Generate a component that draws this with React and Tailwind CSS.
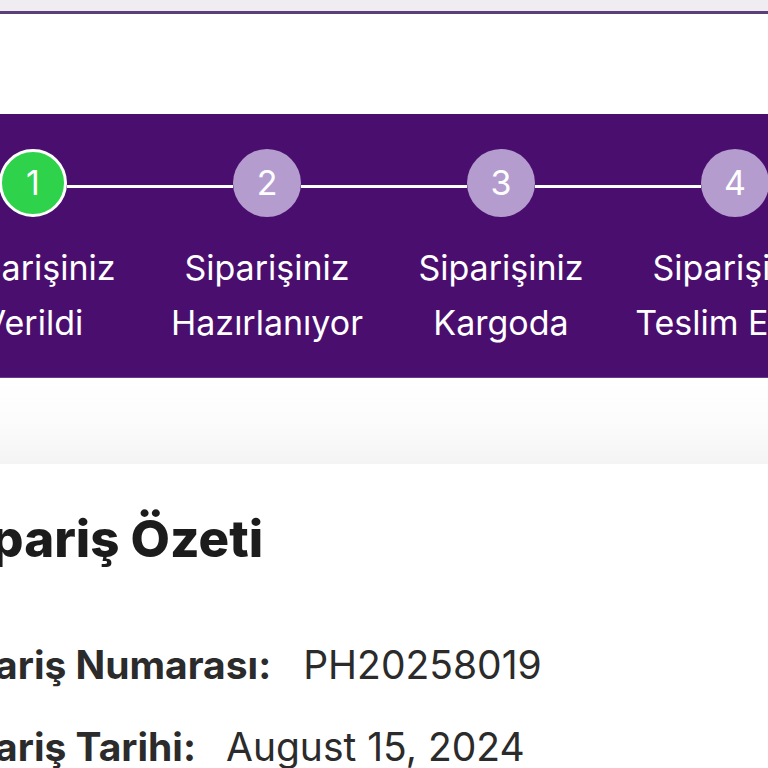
import React from "react";

const steps = [
  { n: 1, l1: "Siparişiniz", l2: "Verildi", done: true },
  { n: 2, l1: "Siparişiniz", l2: "Hazırlanıyor" },
  { n: 3, l1: "Siparişiniz", l2: "Kargoda" },
  { n: 4, l1: "Siparişiniz", l2: "Teslim Edildi" },
];

export default function App() {
  return (
    <div className="w-[768px] h-[768px] overflow-hidden bg-white" style={{ fontFamily: "Inter, 'Noto Sans', sans-serif" }}>
      <div className="h-[11px] bg-[#efedf1]" />
      <div className="h-[3px] bg-[#5b3f7b]" />
      <div className="h-[100px] bg-white" />
      <div className="h-[264px] bg-[#4a0e6e] border-b border-[#6a3a8a] pt-[35px]">
        <div className="flex ml-[-84px] w-[936px]">
          {steps.map((s, i) => (
            <div key={s.n} className="w-[234px] flex flex-col items-center shrink-0">
              <div className="flex items-center w-full">
                <div className={`flex-1 h-[3px] mt-[6px] ${i === 0 ? "bg-transparent" : "bg-white"}`} />
                <div
                  className={`w-[68px] h-[68px] rounded-full flex items-center justify-center text-white text-[34px] leading-none ${
                    s.done ? "bg-[#2ed24b] border-[3px] border-white" : "bg-[#b59ccf]"
                  }`}
                >
                  {s.n}
                </div>
                <div className={`flex-1 h-[3px] mt-[6px] ${i === steps.length - 1 ? "bg-transparent" : "bg-white"}`} />
              </div>
              <div className="mt-[23px] text-white text-[34px] leading-[55px] text-center whitespace-nowrap">
                <div>{s.l1}</div>
                <div>{s.l2}</div>
              </div>
            </div>
          ))}
        </div>
      </div>
      <div className="h-[86px] bg-gradient-to-b from-white via-[#fcfcfc] to-[#f4f4f4]" />
      <div className="bg-white pt-[44px] text-[#2b2b2b]">
        <h1 className="ml-[-57px] text-[51px] leading-[62px] font-extrabold text-[#1c1c1c] whitespace-nowrap">Sipariş Özeti</h1>
        <div className="ml-[-66px] mt-[54px] text-[39px] leading-[82px] whitespace-nowrap">
          <div className="flex gap-[32px]">
            <span className="font-bold">Sipariş Numarası:</span>
            <span>PH20258019</span>
          </div>
          <div className="flex gap-[30px]">
            <span className="font-bold">Sipariş Tarihi:</span>
            <span>August 15, 2024</span>
          </div>
        </div>
      </div>
    </div>
  );
}
